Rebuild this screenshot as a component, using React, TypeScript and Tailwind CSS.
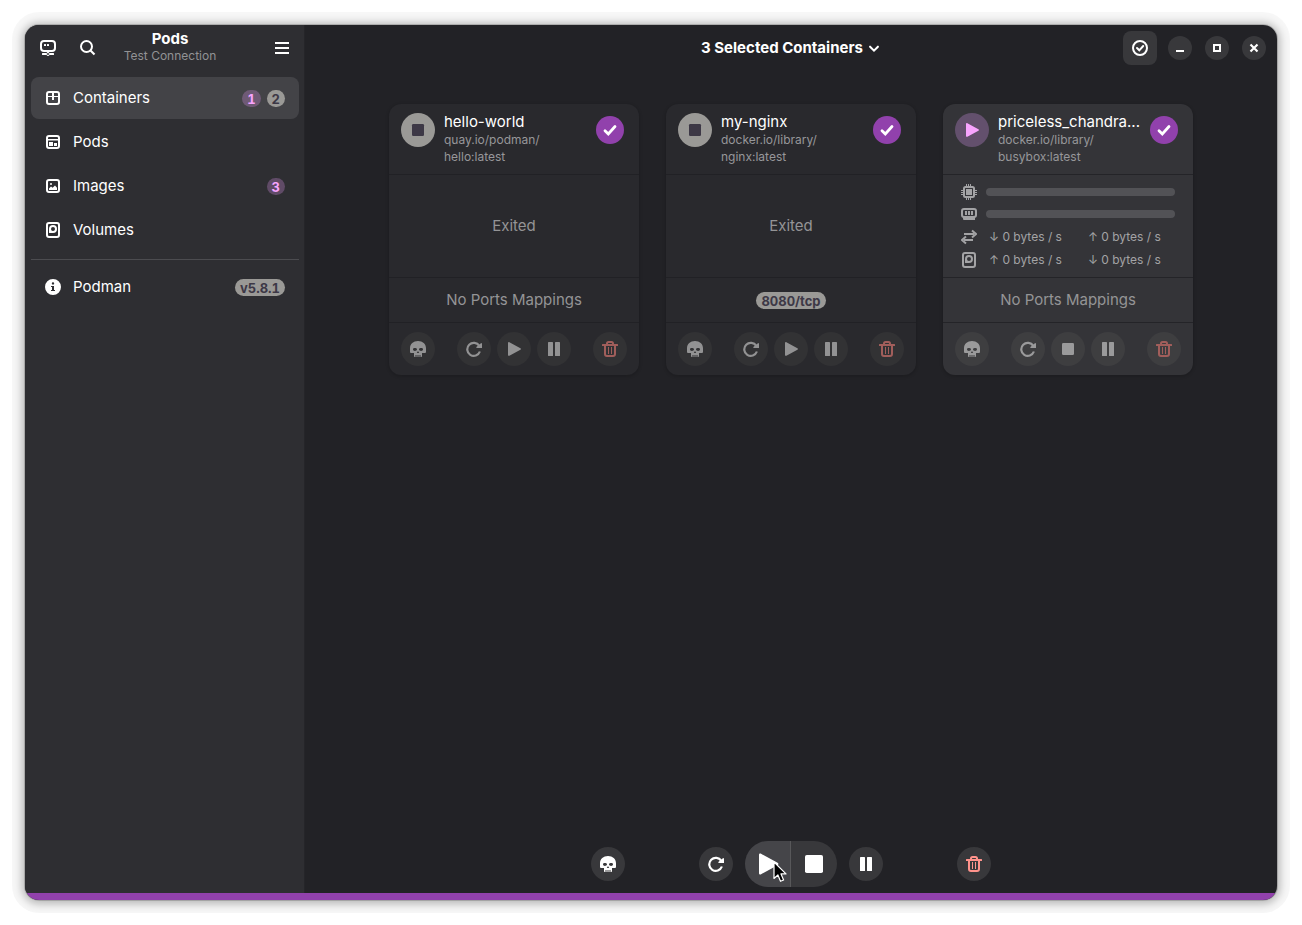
import React, { useState } from 'react';
import clsx from 'clsx';

type IconProps = { className?: string };

function Icon({ className = 'size-4', children }: IconProps & { children: React.ReactNode }) {
  return (
    <svg viewBox="0 0 16 16" fill="currentColor" className={clsx('shrink-0', className)} aria-hidden="true">
      {children}
    </svg>
  );
}

const ConnectionIcon = () => (
  <Icon>
    <rect x="1" y="1" width="14" height="10" rx="3" fill="none" stroke="currentColor" strokeWidth="2" />
    <rect x="4" y="4" width="2" height="2" rx="0.6" />
    <rect x="7" y="4" width="2" height="2" rx="0.6" />
    <path d="M7.5 11h1v2h-1zM2.6 13h3.6v2H2.6a.6.6 0 0 1-.6-.6v-.8a.6.6 0 0 1 .6-.6zM9.8 13h3.6a.6.6 0 0 1 .6.6v.8a.6.6 0 0 1-.6.6H9.8z" />
    <circle cx="8" cy="14" r="1.5" fill="none" stroke="currentColor" />
  </Icon>
);

const SearchIcon = () => (
  <Icon>
    <circle cx="6.5" cy="6.5" r="5.5" fill="none" stroke="currentColor" strokeWidth="2" />
    <path d="M10.5 10.5l4 4" stroke="currentColor" strokeWidth="2.2" />
  </Icon>
);

const MenuIcon = () => (
  <Icon>
    <path d="M1 2h14v2H1zM1 7h14v2H1zM1 12h14v2H1z" />
  </Icon>
);

const ContainersIcon = () => (
  <Icon>
    <rect x="2" y="2" width="12" height="12" rx="2" fill="none" stroke="currentColor" strokeWidth="2" />
    <path d="M2 6h12v1H2zM7 2h2v8H7z" />
  </Icon>
);

const PodsIcon = () => (
  <Icon>
    <rect x="2" y="2" width="12" height="12" rx="2" fill="none" stroke="currentColor" strokeWidth="2" />
    <path d="M2 5h12v1.5H2zM4 8h4v4H4zM9 9h3v3H9z" />
  </Icon>
);

const ImagesIcon = () => (
  <Icon>
    <rect x="2" y="2" width="12" height="12" rx="2" fill="none" stroke="currentColor" strokeWidth="2" />
    <circle cx="6" cy="6" r="1" />
    <path d="M4 12v-1.6L6 8.6l1.6 1.2L10 7.4l2 2.4V12z" />
  </Icon>
);

const DiskIcon = () => (
  <Icon>
    <rect x="2" y="1" width="12" height="14" rx="2" fill="none" stroke="currentColor" strokeWidth="2" />
    <path
      fillRule="evenodd"
      d="M8 3a4 4 0 1 1 0 8H4.600a.6.6 0 0 1-.6-.6V7a4 4 0 0 1 4-4zm0 2a2 2 0 1 0 0 4 2 2 0 0 0 0-4z"
    />
  </Icon>
);

const InfoIcon = () => (
  <Icon>
    <path
      fillRule="evenodd"
      d="M8 0a8 8 0 1 1 0 16A8 8 0 0 1 8 0zm0 3.200a1.200 1.200 0 1 0 0 2.400 1.200 1.200 0 0 0 0-2.400zM6 7v1h1v3H6v1h4v-1H9V7z"
    />
  </Icon>
);

const SkullIcon = () => (
  <Icon>
    <path
      fillRule="evenodd"
      d="M8 0c4.6 0 8 3 8 7.2V11a1 1 0 0 1-1 1h-3v3.2a.8.8 0 0 1-.8.8h-.7v-2h-1v2h-1v-2h-1v2h-1v-2h-1v2h-.7a.8.8 0 0 1-.8-.8V12H1a1 1 0 0 1-1-1V7.200C0 3 3.400 0 8 0zM4.600 7C3.500 7 3 7.600 3 8.300 3 9.300 3.800 10 4.900 10 6 10 7 9.400 7 8.300 7 7.400 5.900 7 4.600 7zm6.800 0C10.100 7 9 7.400 9 8.300 9 9.400 10 10 11.100 10 12.200 10 13 9.300 13 8.300 13 7.600 12.500 7 11.400 7zM8 10l-1.200 2h2.400z"
    />
  </Icon>
);

const RestartIcon = () => (
  <Icon>
    <path d="M13.300 4.900A6.500 6.500 0 1 0 13.900 10.500" fill="none" stroke="currentColor" strokeWidth="2.200" />
    <path d="M15.200 2c.5 0 .8.300.8.800V7H11c-.6 0-1-.400-.700-.900z" />
  </Icon>
);

const PlayIcon = ({ className }: IconProps) => (
  <Icon className={className}>
    <path d="M2 1.900C2 1.200 2.700.800 3.400 1.200l11 6c.7.400.7 1.200 0 1.600l-11 6C2.700 15.200 2 14.800 2 14.100z" />
  </Icon>
);

const StopIcon = ({ className }: IconProps) => (
  <Icon className={className}>
    <rect x="2" y="2" width="12" height="12" rx="1.200" />
  </Icon>
);

const PauseIcon = () => (
  <Icon>
    <rect x="2" y="1" width="5" height="14" rx="0.600" />
    <rect x="9" y="1" width="5" height="14" rx="0.600" />
  </Icon>
);

const TrashIcon = () => (
  <Icon>
    <path d="M5 4V2.500A1.500 1.500 0 0 1 6.500 1h3A1.500 1.500 0 0 1 11 2.500V4" fill="none" stroke="currentColor" strokeWidth="2" />
    <path d="M.5 3h15a.5.5 0 0 1 .5.5V5H0V3.500A.5.5 0 0 1 .5 3zM6 6h1v7H6zM9 6h1v7H9z" />
    <path d="M3 4v9a2 2 0 0 0 2 2h6a2 2 0 0 0 2-2V4" fill="none" stroke="currentColor" strokeWidth="2" />
  </Icon>
);

const CpuIcon = () => (
  <Icon>
    <path d="M5 0h1v3H5zM7 0h1v3H7zM9 0h1v3H9zM5 13h1v3H5zM7 13h1v3H7zM9 13h1v3H9zM0 6h3v1H0zM0 8h3v1H0zM0 10h3v1H0zM13 6h3v1h-3zM13 8h3v1h-3zM13 10h3v1h-3zM5 5h6v6H5z" />
    <rect x="3" y="3" width="10" height="10" rx="1.500" fill="none" stroke="currentColor" strokeWidth="2" />
  </Icon>
);

const MemoryIcon = () => (
  <Icon>
    <rect x="1" y="3" width="14" height="8" rx="2" fill="none" stroke="currentColor" strokeWidth="2" />
    <path d="M4 5h2v4H4zM7 5h2v4H7zM10 5h2v4h-2zM2 11h12v3H3a1 1 0 0 1-1-1z" />
  </Icon>
);

const NetworkIcon = () => (
  <Icon>
    <path d="M3 4h10v2H3zM3 10h9v2H3z" />
    <path d="M11 1.500L15 5l-4 3.500M5 7.500L1 11l4 3.500" fill="none" stroke="currentColor" strokeWidth="2" />
  </Icon>
);

const CheckIcon = ({ className }: IconProps) => (
  <Icon className={className}>
    <path d="M3 8.700L6.300 12l6.700-7.500" fill="none" stroke="currentColor" strokeWidth="2.800" strokeLinecap="round" />
  </Icon>
);

const SelectIcon = () => (
  <Icon>
    <circle cx="8" cy="8" r="7" fill="none" stroke="currentColor" strokeWidth="2" />
    <path d="M5 8l2.300 2.300L11.200 6" fill="none" stroke="currentColor" strokeWidth="2" strokeLinecap="round" />
  </Icon>
);

interface NavItem {
  label: string;
  icon: React.ReactNode;
  active?: number;
  idle?: number | string;
}

const navItems: NavItem[] = [
  { label: 'Containers', icon: <ContainersIcon />, active: 1, idle: 2 },
  { label: 'Pods', icon: <PodsIcon /> },
  { label: 'Images', icon: <ImagesIcon />, active: 3 },
  { label: 'Volumes', icon: <DiskIcon /> },
];

interface Container {
  name: string;
  image: [string, string];
  running: boolean;
  port?: string;
}

const containers: Container[] = [
  { name: 'hello-world', image: ['quay.io/podman/', 'hello:latest'], running: false },
  { name: 'my-nginx', image: ['docker.io/library/', 'nginx:latest'], running: false, port: '8080/tcp' },
  { name: 'priceless_chandra...', image: ['docker.io/library/', 'busybox:latest'], running: true },
];

function Badge({ accent, children }: { accent?: boolean; children: React.ReactNode }) {
  return (
    <span
      className={clsx(
        'flex h-[17px] min-w-[18px] items-center justify-center rounded-full px-[5px] pt-px text-[13px] font-bold tabular-nums',
        accent ? 'bg-[#f0a0ff]/26 text-[#f8a4ff]' : 'bg-[#9a9996] text-[#3d3846]',
      )}
    >
      {children}
    </span>
  );
}

function NavRow({ item, selected, onClick }: { item: NavItem; selected: boolean; onClick?: () => void }) {
  return (
    <button
      onClick={onClick}
      className={clsx(
        'flex h-[42px] w-full items-center gap-3 rounded-lg px-3.5 text-left',
        selected ? 'bg-[#434347]' : 'hover:bg-white/5',
      )}
    >
      {item.icon}
      <span className="flex-1">{item.label}</span>
      <span className="flex gap-1.5">
        {item.active !== undefined && <Badge accent>{item.active}</Badge>}
        {item.idle !== undefined && <Badge>{item.idle}</Badge>}
      </span>
    </button>
  );
}

function Sidebar() {
  const [page, setPage] = useState('Containers');

  return (
    <aside className="flex w-70 shrink-0 flex-col bg-[#2e2e32] shadow-[inset_-1px_0_#252529]">
      <header className="flex h-[46px] items-center px-1.5">
        <button aria-label="Connections" className="flex size-[34px] items-center justify-center rounded-lg">
          <ConnectionIcon />
        </button>
        <button aria-label="Search" className="ml-1.5 flex size-[34px] items-center justify-center rounded-lg">
          <SearchIcon />
        </button>
        <div className="flex-1 pr-[30px] text-center">
          <h1 className="text-[15px] leading-4 font-bold">Pods</h1>
          <p className="text-xs leading-[18px] text-[#929295]">Test Connection</p>
        </div>
        <button aria-label="Main menu" className="flex size-[34px] items-center justify-center rounded-lg">
          <MenuIcon />
        </button>
      </header>
      <nav className="flex flex-col gap-0.5 p-1.5">
        {navItems.map((item) => (
          <NavRow key={item.label} item={item} selected={page === item.label} onClick={() => setPage(item.label)} />
        ))}
        <hr className="mt-1.5 mb-1 border-t border-[#4c4c50]" />
        <NavRow item={{ label: 'Podman', icon: <InfoIcon />, idle: 'v5.8.1' }} selected={false} />
      </nav>
    </aside>
  );
}

function RoundButton({
  label,
  className,
  children,
}: {
  label: string;
  className?: string;
  children: React.ReactNode;
}) {
  return (
    <button aria-label={label} className={clsx('flex size-[34px] items-center justify-center rounded-full', className)}>
      {children}
    </button>
  );
}

function Stats() {
  return (
    <div className="flex flex-col gap-1.5 px-[18px] py-[9px] text-xs text-[#a3a3a5]">
      <div className="flex h-4 items-center gap-[9px]">
        <CpuIcon />
        <div className="h-2 flex-1 rounded-full bg-[#525256]" />
      </div>
      <div className="flex h-4 items-center gap-[9px]">
        <MemoryIcon />
        <div className="h-2 flex-1 rounded-full bg-[#525256]" />
      </div>
      <div className="flex h-[17px] items-center gap-3">
        <NetworkIcon />
        <div className="flex gap-[26px]">
          <span>↓ 0 bytes / s</span>
          <span>↑ 0 bytes / s</span>
        </div>
      </div>
      <div className="flex h-[17px] items-center gap-3">
        <DiskIcon />
        <div className="flex gap-[26px]">
          <span>↑ 0 bytes / s</span>
          <span>↓ 0 bytes / s</span>
        </div>
      </div>
    </div>
  );
}

function ContainerCard({ container }: { container: Container }) {
  const { name, image, running, port } = container;
  const [selected, setSelected] = useState(true);
  const line = running ? 'border-[#242428]' : 'border-[#212125]';
  const button = running ? 'bg-[#3e3e40]' : 'bg-[#323234]';
  const glyph = running ? 'text-[#9a9a9b]' : 'text-[#929293]';

  return (
    <article
      className={clsx(
        'w-[250px] rounded-xl shadow-[0_1px_3px_1px_rgba(0,0,0,0.14)]',
        running ? 'bg-[#343438]' : 'bg-[#29292d]',
      )}
    >
      <div className="flex h-[70px] items-start pt-[9px] pr-[15px] pl-3">
        <div
          className={clsx(
            'flex size-[34px] shrink-0 items-center justify-center rounded-full',
            running ? 'bg-[#63506d] text-[#f8a4ff]' : 'bg-[#9a9996] text-[#3d3846]',
          )}
        >
          {running ? <PlayIcon /> : <StopIcon />}
        </div>
        <div className="ml-[9px] min-w-0 flex-1">
          <h2 className="truncate text-[15px] leading-[18px]">{name}</h2>
          <p className="text-xs leading-[17px] text-[#97979a]">
            {image[0]}
            <br />
            {image[1]}
          </p>
        </div>
        <label className="relative mt-[3px] ml-1 flex size-7 shrink-0">
          <input
            type="checkbox"
            aria-label={`Select ${name}`}
            checked={selected}
            onChange={(e) => setSelected(e.target.checked)}
            className="size-7 appearance-none rounded-full bg-[#48484c] checked:bg-[#9141ac]"
          />
          {selected && <CheckIcon className="pointer-events-none absolute inset-1.5 size-4" />}
        </label>
      </div>
      <div className={clsx('h-[103px] border-t', line)}>
        {running ? (
          <Stats />
        ) : (
          <p className="flex h-full items-center justify-center text-[#949496]">Exited</p>
        )}
      </div>
      <div className={clsx('flex h-[45px] items-center justify-center border-t text-[#949496]', line)}>
        {port ? <Badge>{port}</Badge> : 'No Ports Mappings'}
      </div>
      <div className={clsx('flex h-[53px] items-center justify-between border-t px-3', line)}>
        <RoundButton label="Kill" className={clsx(button, glyph)}>
          <SkullIcon />
        </RoundButton>
        <div className="flex gap-1.5">
          <RoundButton label="Restart" className={clsx(button, glyph)}>
            <RestartIcon />
          </RoundButton>
          <RoundButton label={running ? 'Stop' : 'Start'} className={clsx(button, glyph)}>
            {running ? <StopIcon /> : <PlayIcon />}
          </RoundButton>
          <RoundButton label="Pause" className={clsx(button, glyph)}>
            <PauseIcon />
          </RoundButton>
        </div>
        <RoundButton label="Delete" className={clsx(button, 'text-[#a15e5b]')}>
          <TrashIcon />
        </RoundButton>
      </div>
    </article>
  );
}

function HeaderBar() {
  const windowButton = 'flex size-6 items-center justify-center rounded-full bg-[#38383b]';

  return (
    <header className="grid h-[46px] grid-cols-[1fr_auto_1fr] items-center">
      <button className="col-start-2 flex items-center gap-1 font-bold">
        3 Selected Containers
        <Icon className="size-3.5">
          <path d="M3.500 6.500L8 11 12.500 6.500" fill="none" stroke="currentColor" strokeWidth="2.300" strokeLinecap="round" />
        </Icon>
      </button>
      <div className="flex items-center justify-end gap-[13px] pr-[11px]">
        <button aria-label="Selection mode" className="-mr-0.5 flex size-[34px] items-center justify-center rounded-lg bg-[#38383b]">
          <SelectIcon />
        </button>
        <button aria-label="Minimize" className={windowButton}>
          <Icon>
            <path d="M4 10h8v2H4z" />
          </Icon>
        </button>
        <button aria-label="Maximize" className={windowButton}>
          <Icon>
            <path d="M5 5h6v6H5z" fill="none" stroke="currentColor" strokeWidth="2" />
          </Icon>
        </button>
        <button aria-label="Close" className={windowButton}>
          <Icon>
            <path d="M4.500 4.500l7 7M11.500 4.500l-7 7" stroke="currentColor" strokeWidth="2.200" />
          </Icon>
        </button>
      </div>
    </header>
  );
}

function ActionBar() {
  const button = 'bg-[#38383b]';

  return (
    <footer className="flex justify-center pb-1.5">
      <div className="flex w-[400px] items-center justify-between">
        <RoundButton label="Kill" className={button}>
          <SkullIcon />
        </RoundButton>
        <div className="flex items-center gap-3">
          <RoundButton label="Restart" className={button}>
            <RestartIcon />
          </RoundButton>
          <div className="flex h-[46px]">
            <button
              aria-label="Start"
              className="relative flex w-[46px] items-center justify-center rounded-l-full border-r border-[#58585a] bg-[#454549]"
            >
              <PlayIcon className="size-6" />
              {/* Mouse pointer resting on the start button */}
              <svg viewBox="0 0 14 22" className="absolute top-5 left-7 h-[22px] w-3.5" aria-hidden="true">
                <path
                  d="M1 1v16.500l3.900-3.500 2.600 6.300 3.100-1.300-2.600-6.100h5z"
                  fill="#000"
                  stroke="#fff"
                  strokeWidth="1.200"
                  strokeLinejoin="round"
                />
              </svg>
            </button>
            <button aria-label="Stop" className="flex w-[46px] items-center justify-center rounded-r-full bg-[#38383b]">
              <StopIcon className="size-6" />
            </button>
          </div>
          <RoundButton label="Pause" className={button}>
            <PauseIcon />
          </RoundButton>
        </div>
        <RoundButton label="Delete" className={clsx(button, 'text-[#ff938c]')}>
          <TrashIcon />
        </RoundButton>
      </div>
    </footer>
  );
}

export default function App() {
  return (
    <div className="flex min-h-screen bg-white p-[25px] font-[Inter,sans-serif] text-[15px] leading-5 text-white">
      <div className="flex flex-1 flex-col overflow-hidden rounded-[14px] bg-[#222226] shadow-[0_0_0_1px_rgba(0,0,0,0.16),0_0_0_13px_rgba(0,0,0,0.03),0_1px_9px_3px_rgba(0,0,0,0.26)]">
        <div className="flex flex-1">
          <Sidebar />
          <main className="flex min-w-0 flex-1 flex-col">
            <HeaderBar />
            <section className="flex flex-1 flex-wrap content-start items-start justify-center gap-[27px] pt-[33px]">
              {containers.map((container) => (
                <ContainerCard key={container.name} container={container} />
              ))}
            </section>
            <ActionBar />
          </main>
        </div>
        <div className="h-[7px] bg-[#9141ac]" />
      </div>
    </div>
  );
}
